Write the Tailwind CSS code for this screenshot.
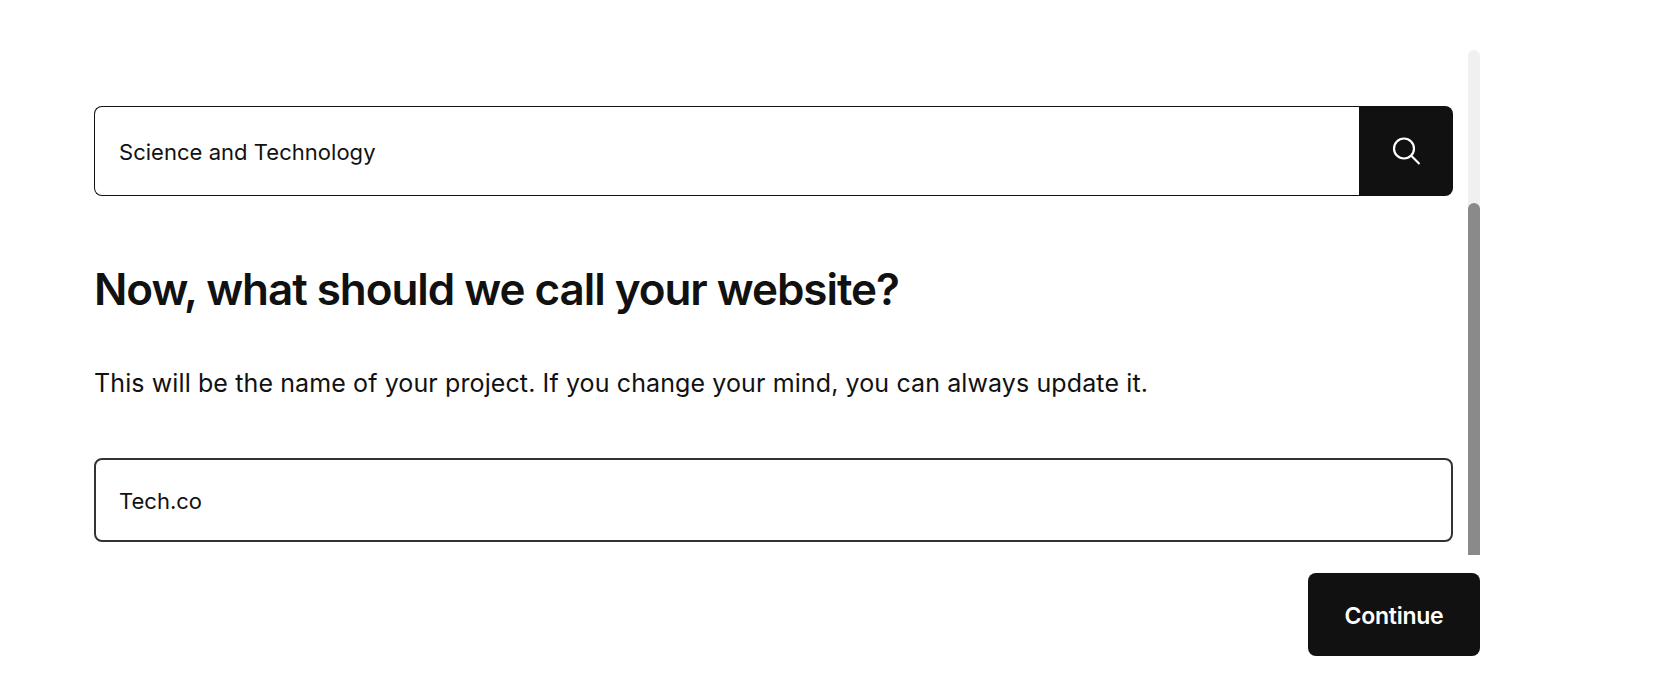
<!DOCTYPE html>
<html lang="en">

<head>
  <meta charset="UTF-8">
  <meta name="viewport" content="width=device-width, initial-scale=1.0">
  <title>Name your website</title>
  <script src="https://cdn.jsdelivr.net/npm/@tailwindcss/browser@4"></script>
</head>

<body class="bg-white font-['Inter',sans-serif] text-[#111111] overflow-hidden">
  <div class="w-[1386px] ml-[94px] pt-[50px]">
    <div class="flex h-[505px] justify-between">
      <div class="w-[1359px] pt-[56px]">
        <!-- search -->
        <div class="flex h-[90px]">
          <div class="flex-1 flex items-center pl-[24px] pt-[2px] border border-r-0 border-[#111111] rounded-l-[8px] text-[22px] tracking-[0.03px]">
            Science and Technology
          </div>
          <button class="w-[94px] flex items-center justify-center bg-[#111111] rounded-r-[8px]">
            <svg width="30" height="30" viewBox="0 0 30 30" fill="none" stroke="white" stroke-width="2.2">
              <circle cx="13" cy="12.5" r="10"></circle>
              <path d="M20.5 20l8 8"></path>
            </svg>
          </button>
        </div>

        <h1 class="mt-[65px] text-[44px] leading-[56px] font-semibold tracking-[-1.05px]">Now, what should we call your website?</h1>
        <p class="mt-[48px] text-[25px] leading-[36px] tracking-[0.11px]">This will be the name of your project. If you change your mind, you can always update it.</p>

        <div class="mt-[57px] h-[84px] flex items-center pl-[23px] pt-[3px] border-2 border-[#333333] rounded-[8px] text-[22px]">
          Tech.co
        </div>
      </div>
      <!-- scrollbar -->
      <div class="w-[12px] bg-[#f0f0f0] rounded-t-[6px] flex flex-col pt-[153px]">
        <div class="flex-1 bg-[#8a8a8a] rounded-t-[6px]"></div>
      </div>
    </div>
    <div class="flex justify-end mt-[18px]">
      <button class="w-[172px] h-[83px] pt-[3px] bg-[#111111] text-white text-[23px] font-semibold tracking-[-0.25px] rounded-[8px]">Continue</button>
    </div>
  </div>
</body>

</html>
